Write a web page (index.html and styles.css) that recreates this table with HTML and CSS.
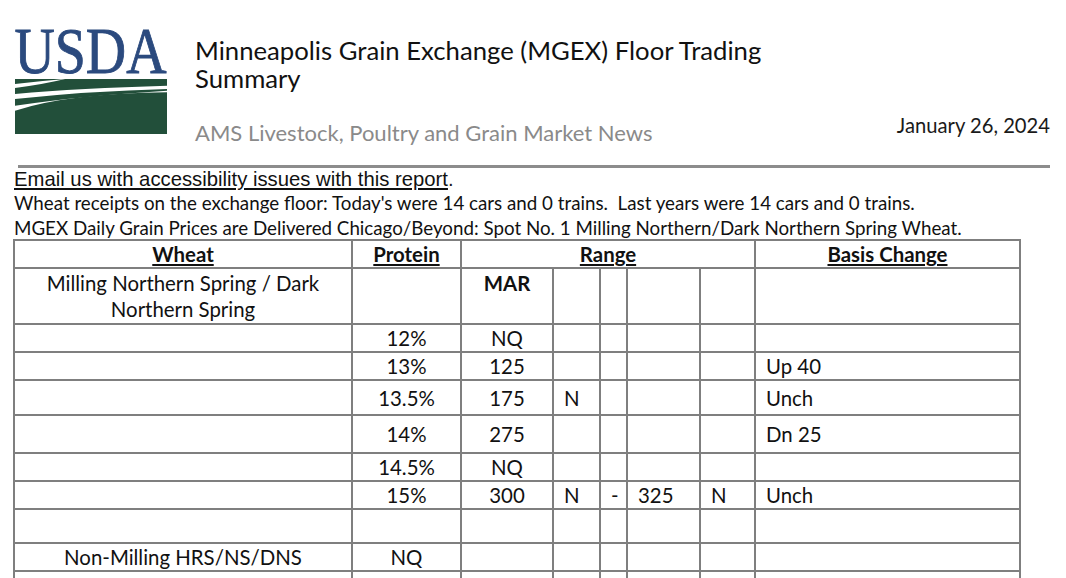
FILE: index.html
```html
<!DOCTYPE html>
<html lang="en">
<head>
<meta charset="utf-8">
<title>Minneapolis Grain Exchange (MGEX) Floor Trading Summary</title>
<link rel="stylesheet" href="styles.css">
</head>
<body>
<div class="page">
  <header class="header">
    <svg class="logo" viewBox="14 26 153 110" width="153" height="110" aria-label="USDA">
      <text x="14.5" y="73" class="logo-text" textLength="152" lengthAdjust="spacingAndGlyphs">USDA</text>
      <path class="field" d="M15 79 L65 79 Q40 81 15 84 Z"/>
      <path class="field" d="M15 88 Q45 84 65 79 L167 79 L167 85.7 Q80 88 15 94 Z"/>
      <path class="field" d="M15 99 Q90 91 167 89 L167 90.7 Q80 96 15 105.7 Z"/>
      <path class="field" d="M15 110.7 Q70 93 167 92.3 L167 134 L15 134 Z"/>
    </svg>
    <div class="titles">
      <h1 class="title">Minneapolis Grain Exchange (MGEX) Floor Trading Summary</h1>
      <p class="subtitle">AMS Livestock, Poultry and Grain Market News</p>
    </div>
    <p class="date">January 26, 2024</p>
  </header>
  <div class="rule"></div>
  <p class="email"><a href="#">Email us with accessibility issues with this report</a>.</p>
  <p class="note">Wheat receipts on the exchange floor: Today's were 14 cars and 0 trains.&nbsp; Last years were 14 cars and 0 trains.</p>
  <p class="note">MGEX Daily Grain Prices are Delivered Chicago/Beyond: Spot No. 1 Milling Northern/Dark Northern Spring Wheat.</p>
  <table class="prices">
    <colgroup>
      <col class="c-wheat"><col class="c-protein"><col class="c-mar"><col class="c-n1"><col class="c-dash"><col class="c-hi"><col class="c-n2"><col class="c-basis">
    </colgroup>
    <thead>
      <tr class="r-head">
        <th>Wheat</th><th>Protein</th><th colspan="5">Range</th><th>Basis Change</th>
      </tr>
    </thead>
    <tbody>
      <tr class="r-class">
        <td class="ctr">Milling Northern Spring / Dark Northern Spring</td><td></td><td class="ctr mar">MAR</td><td></td><td></td><td></td><td></td><td></td>
      </tr>
      <tr class="r-std"><td></td><td class="ctr">12%</td><td class="ctr">NQ</td><td></td><td></td><td></td><td></td><td></td></tr>
      <tr class="r-std"><td></td><td class="ctr">13%</td><td class="ctr">125</td><td></td><td></td><td></td><td></td><td>Up 40</td></tr>
      <tr class="r-mid"><td></td><td class="ctr">13.5%</td><td class="ctr">175</td><td>N</td><td></td><td></td><td></td><td>Unch</td></tr>
      <tr class="r-big"><td></td><td class="ctr">14%</td><td class="ctr">275</td><td></td><td></td><td></td><td></td><td>Dn 25</td></tr>
      <tr class="r-std"><td></td><td class="ctr">14.5%</td><td class="ctr">NQ</td><td></td><td></td><td></td><td></td><td></td></tr>
      <tr class="r-std"><td></td><td class="ctr">15%</td><td class="ctr">300</td><td>N</td><td>-</td><td>325</td><td>N</td><td>Unch</td></tr>
      <tr class="r-blank"><td></td><td></td><td></td><td></td><td></td><td></td><td></td><td></td></tr>
      <tr class="r-std"><td class="ctr">Non-Milling HRS/NS/DNS</td><td class="ctr">NQ</td><td></td><td></td><td></td><td></td><td></td><td></td></tr>
      <tr class="r-std"><td></td><td></td><td></td><td></td><td></td><td></td><td></td><td></td></tr>
    </tbody>
  </table>
</div>
</body>
</html>
```
FILE: styles.css
```css
html, body {
  margin: 0;
  padding: 0;
  background: #ffffff;
}
body {
  font-family: "Lato", "Open Sans", sans-serif;
  color: #1a1a1a;
  width: 1066px;
  overflow: hidden;
}
.page {
  padding-left: 14px;
}
.header {
  display: flex;
  align-items: flex-start;
  height: 136px;
}
.logo {
  display: block;
  margin-top: 26px;
  flex: none;
  overflow: visible;
}
.logo-text {
  font-family: "Liberation Serif", "DejaVu Serif", serif;
  font-size: 66px;
  fill: #2b4a7e;
  stroke: #2b4a7e;
  stroke-width: 0.9px;
}
.field {
  fill: #224f3a;
}
.titles {
  margin-left: 28px;
  flex: 1;
}
.title {
  margin: 36px 0 0 0;
  font-weight: 400;
  font-size: 25.7px;
  line-height: 28px;
  width: 620px;
  color: #111;
}
.subtitle {
  margin: 28px 0 0 0;
  font-size: 22px;
  line-height: 26px;
  color: #8a8a8a;
}
.date {
  margin: 112px 16px 0 0;
  font-size: 20.2px;
  line-height: 26px;
  color: #1a1a1a;
}
.rule {
  margin: 29px 16px 0 4px;
  border-top: 3px solid #8c8c8c;
}
.email {
  margin: 0;
  font-family: "Liberation Sans", Arial, sans-serif;
  font-size: 20.3px;
  line-height: 23px;
}
.email a {
  color: #111;
  text-decoration: underline;
}
.note {
  margin: 0;
  font-size: 18.75px;
  line-height: 24.5px;
  color: #111;
}
.prices {
  border-collapse: collapse;
  table-layout: fixed;
  width: 1008px;
  margin-top: -1px;
  margin-left: -1px;
  font-size: 20.4px;
  color: #111;
}
.prices th, .prices td {
  border: 2px solid #7f7f7f;
  padding: 0 0 0 10px;
  text-align: left;
  vertical-align: middle;
  line-height: 22px;
  overflow: hidden;
  white-space: nowrap;
}
.prices th {
  text-align: center;
  padding: 0;
  font-weight: 700;
  text-decoration: underline;
}
.prices td.ctr {
  text-align: center;
  padding: 0;
}
.c-wheat { width: 338px; }
.c-protein { width: 109px; }
.c-mar { width: 92px; }
.c-n1 { width: 47px; }
.c-dash { width: 27px; }
.c-hi { width: 73px; }
.c-n2 { width: 55px; }
.c-basis { width: 265px; }
.r-head { height: 28px; }
.r-class { height: 56px; }
.r-class td {
  vertical-align: top;
  white-space: normal;
  padding-top: 1px;
  line-height: 26px;
}
.r-class td.ctr {
  padding: 1px 20px 0 20px;
}
.mar { font-weight: 700; }
.r-std { height: 28px; }
.r-mid { height: 35px; }
.r-big { height: 38px; }
.r-blank { height: 34px; }
```
